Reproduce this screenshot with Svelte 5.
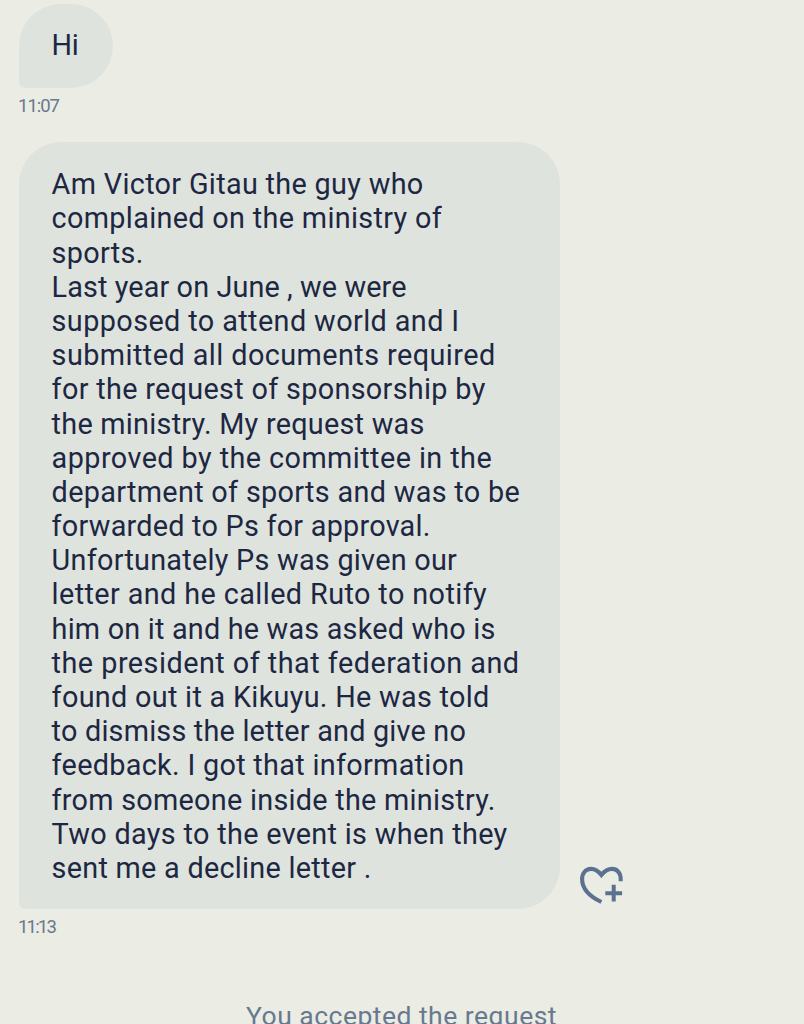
<script lang="ts">
	type Line = { text: string; width: number };

	const greeting: Line[] = [{ text: "Hi", width: 27 }];

	const story: Line[] = [
		{ text: "Am Victor Gitau the guy who", width: 372 },
		{ text: "complained on the ministry of", width: 390.5 },
		{ text: "sports.", width: 92 },
		{ text: "Last year on June , we were", width: 355 },
		{ text: "supposed to attend world and I", width: 408 },
		{ text: "submitted all documents required", width: 444 },
		{ text: "for the request of sponsorship by", width: 434 },
		{ text: "the ministry. My request was", width: 373 },
		{ text: "approved by the committee in the", width: 440.5 },
		{ text: "department of sports and was to be", width: 468.5 },
		{ text: "forwarded to Ps for approval.", width: 379 },
		{ text: "Unfortunately Ps was given our", width: 405.5 },
		{ text: "letter and he called Ruto to notify", width: 435.5 },
		{ text: "him on it and he was asked who is", width: 444 },
		{ text: "the president of that federation and", width: 468 },
		{ text: "found out it a Kikuyu. He was told", width: 438 },
		{ text: "to dismiss the letter and give no", width: 414.5 },
		{ text: "feedback. I got that information", width: 413 },
		{ text: "from someone inside the ministry.", width: 444 },
		{ text: "Two days to the event is when they", width: 456 },
		{ text: "sent me a decline letter .", width: 320 }
	];

	// spread the letters so the line takes its set width
	function fit(node: HTMLElement, width: number) {
		const natural = node.getBoundingClientRect().width;
		const count = node.textContent?.length ?? 1;
		node.style.letterSpacing = `${(width - natural) / count}px`;
	}
</script>

<main class="chat">
	<div class="bubble small">
		{#each greeting as line}
			<div class="line"><span use:fit={line.width}>{line.text}</span></div>
		{/each}
	</div>
	<div class="time"><span use:fit={41}>11:07</span></div>

	<div class="row">
		<div class="bubble large">
			{#each story as line}
				<div class="line"><span use:fit={line.width}>{line.text}</span></div>
			{/each}
		</div>
		<button class="react" aria-label="Add reaction">
			<svg width="44" height="40" viewBox="0 0 44 40" fill="none" stroke="currentColor">
				<path
					d="M40.7 15.2V13C40.7 6.6 36.8 2.9 32 2.9C27.4 2.9 24.4 5.2 21.4 9C18.4 5.2 15.4 2.9 11 2.9C5.8 2.9 2.1 7.2 2.1 13C2.1 21.6 8.2 29.8 21.4 36"
					stroke-width="4.1"
				/>
				<path d="M33.7 18.8V35.6M25.3 27.2H42.1" stroke-width="4" />
			</svg>
		</button>
	</div>
	<div class="time"><span use:fit={37}>11:13</span></div>

	<div class="notice"><span use:fit={311}>You accepted the request</span></div>
</main>

<style>
	:global(body) {
		background: #ebece4;
		overflow: hidden;
	}

	.chat {
		box-sizing: border-box;
		height: 1024px;
		padding: 4px 19px 0;
		overflow: hidden;
		background: #ebece4;
		font-family: Roboto, "Liberation Sans", sans-serif;
		color: #1d2742;
	}

	.bubble {
		box-sizing: border-box;
		padding-left: 32.6px;
		background: #dee3de;
		border-radius: 42px 42px 42px 6px;
		font-size: 28.8px;
		line-height: 34.2px;
		white-space: nowrap;
	}

	.line {
		height: 34.2px;
	}

	.small {
		width: 94px;
		height: 84px;
		padding-top: 24px;
	}

	.large {
		width: 541px;
		height: 767px;
		padding-top: 25.2px;
	}

	.row {
		display: flex;
		align-items: flex-end;
		gap: 20px;
		margin-top: 24px;
	}

	.react {
		display: block;
		margin-bottom: 3px;
		padding: 0;
		border: none;
		background: none;
		color: #5b7190;
	}

	.react svg {
		display: block;
	}

	.time {
		height: 24px;
		margin-top: 6px;
		font-size: 18.5px;
		line-height: 24px;
		color: #68798c;
		white-space: nowrap;
	}

	.time span {
		margin-left: -1px;
	}

	.notice {
		margin-top: 60px;
		padding-left: 227px;
		font-size: 26.5px;
		line-height: 34px;
		color: #68798f;
		white-space: nowrap;
	}
</style>
